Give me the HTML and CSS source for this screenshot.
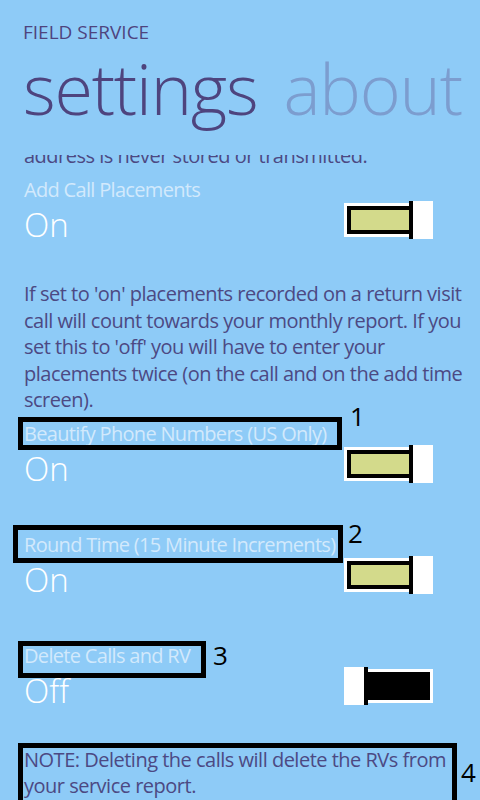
FILE: index.html
```html
<!DOCTYPE html>
<html lang="en">
<head>
<meta charset="utf-8">
<title>Field Service - settings</title>
<link rel="stylesheet" href="styles.css">
</head>
<body>
<div class="screen">
  <header class="header">
    <div class="app-title">FIELD SERVICE</div>
    <div class="pivot">
      <span class="pivot-item active">settings</span>
      <span class="pivot-item">about</span>
    </div>
  </header>
  <main class="content">
    <div class="scroller">
      <p class="desc">address is never stored or transmitted.</p>

      <section class="setting first">
        <div class="label"><span class="label-text">Add Call Placements</span></div>
        <div class="row">
          <span class="state">On</span>
          <div class="switch on"><div class="track"><div class="fill"></div></div><div class="thumb"></div></div>
        </div>
      </section>

      <p class="desc para">If set to 'on' placements recorded on a return visit call will count towards your monthly report. If you set this to 'off' you will have to enter your placements twice (on the call and on the add time screen).</p>

      <section class="setting after-para">
        <div class="label"><span class="label-text">Beautify Phone Numbers (US Only)<span class="mark m1"></span><span class="num n1">1</span></span></div>
        <div class="row">
          <span class="state">On</span>
          <div class="switch on"><div class="track"><div class="fill"></div></div><div class="thumb"></div></div>
        </div>
      </section>

      <section class="setting">
        <div class="label"><span class="label-text">Round Time (15 Minute Increments)<span class="mark m2"></span><span class="num n2">2</span></span></div>
        <div class="row">
          <span class="state">On</span>
          <div class="switch on"><div class="track"><div class="fill"></div></div><div class="thumb"></div></div>
        </div>
      </section>

      <section class="setting">
        <div class="label"><span class="label-text">Delete Calls and RV<span class="mark m3"></span><span class="num n3">3</span></span></div>
        <div class="row">
          <span class="state">Off</span>
          <div class="switch off"><div class="thumb"></div><div class="track"><div class="fill"></div></div></div>
        </div>
      </section>

      <div class="note-wrap">
        <p class="desc note">NOTE: Deleting the calls will delete the RVs from your service report.</p>
        <span class="mark m4"></span><span class="num n4">4</span>
      </div>
    </div>
  </main>
</div>
</body>
</html>
```

FILE: styles.css
```css
html, body {
  margin: 0;
  padding: 0;
}
body {
  width: 480px;
  height: 800px;
  overflow: hidden;
  background: #8ecbf7;
  font-family: "Open Sans", "Noto Sans", sans-serif;
}
.screen {
  width: 480px;
  height: 800px;
  overflow: hidden;
  background: #8ecbf7;
}

/* header */
.header {
  height: 155px;
  box-sizing: border-box;
  padding-top: 20px;
  overflow: hidden;
}
.app-title {
  margin-left: 23px;
  font-size: 19px;
  line-height: 24px;
  color: #4e447e;
}
.pivot {
  margin-top: 4px;
  margin-left: 23px;
  white-space: nowrap;
  font-size: 70px;
  font-weight: 300;
  line-height: 80px;
  letter-spacing: -1.2px;
  display: flex;
  gap: 26px;
}
.pivot-item {
  color: #7c9dcf;
}
.pivot-item.active {
  color: #4e447e;
}

/* content */
.content {
  height: 645px;
  overflow: hidden;
  padding: 0 12px 0 24px;
}
.scroller {
  margin-top: -12px;
}
.desc {
  margin: 0;
  font-size: 20px;
  line-height: 26.6px;
  letter-spacing: -0.5px;
  color: #4c4983;
}
.para {
  margin-top: 42.5px;
}

.setting {
  margin-top: 50px;
}
.setting.first {
  margin-top: 8px;
}
.setting.after-para {
  margin-top: 7.5px;
}
.label {
  height: 23px;
  line-height: 23px;
  font-size: 20px;
  letter-spacing: -0.68px;
  color: #d2e9fc;
  white-space: nowrap;
}
.label-text {
  position: relative;
  display: inline-block;
  vertical-align: top;
}
.row {
  display: flex;
  justify-content: space-between;
  align-items: flex-start;
  height: 38px;
  margin-right: 35px;
}
.state {
  margin-top: 5px;
  font-size: 33px;
  font-weight: 300;
  line-height: 38px;
  color: #ffffff;
}

/* toggle switch */
.switch {
  display: flex;
  align-items: center;
  width: 89px;
  height: 38px;
}
.track {
  width: 65px;
  height: 34px;
  box-sizing: border-box;
  background: #ffffff;
}
.thumb {
  width: 24px;
  height: 38px;
  box-sizing: border-box;
  background: #ffffff;
}
.fill {
  height: 100%;
  box-sizing: border-box;
}
.switch.on .track {
  padding: 3px 0 3px 3px;
}
.switch.on .fill {
  border: 4px solid #000;
  border-right: 0;
  background: #d3da8b;
}
.switch.on .thumb {
  border-left: 4px solid #000;
}
.switch.off .thumb {
  border-right: 4px solid #000;
}
.switch.off .track {
  padding: 3px 3px 3px 0;
}
.switch.off .fill {
  background: #000;
}

/* annotation overlays */
.mark {
  position: absolute;
  box-sizing: border-box;
  border: 5px solid #000;
  pointer-events: none;
}
.num {
  position: absolute;
  font-size: 26px;
  line-height: 26px;
  letter-spacing: 0;
  color: #000;
}
.m1 { left: -6px; top: -5px; width: 324px; height: 33px; }
.n1 { left: 326px; top: -19px; }
.m2 { left: -11px; top: -8px; width: 330px; height: 38px; }
.n2 { left: 324px; top: -13px; }
.m3 { left: -6px; top: -3px; width: 188px; height: 37px; }
.n3 { left: 189px; top: -2px; }

.note-wrap {
  position: relative;
  margin-top: 42px;
}
.note {
  margin-right: 8px;
}
.m4 { left: -6px; top: -4px; width: 439px; height: 120px; }
.n4 { left: 437px; top: 12px; }
```
